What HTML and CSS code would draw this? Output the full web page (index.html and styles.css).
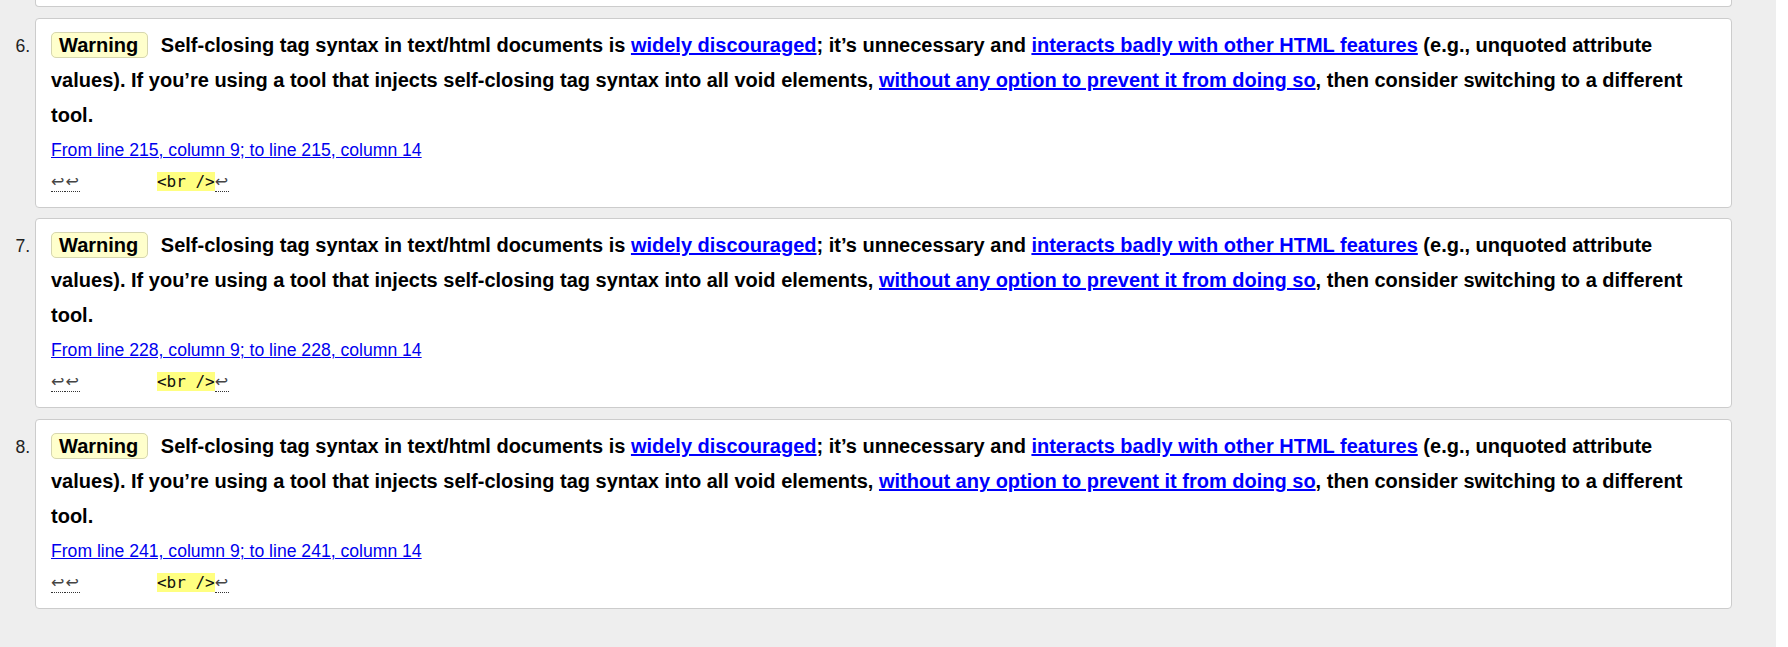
FILE: index.html
```html
<!DOCTYPE html>
<html lang="en">
<head>
<meta charset="utf-8">
<title>Validation results</title>
<link rel="stylesheet" href="styles.css">
</head>
<body>
<ol class="results" start="5">
  <li class="card cut"></li>
  <li class="card">
    <p class="msg"><strong class="badge">Warning</strong> <span>Self-closing tag syntax in text/html documents is <a href="#">widely discouraged</a>; it’s unnecessary and <a href="#">interacts badly with other HTML features</a> (e.g., unquoted attribute values). If you’re using a tool that injects self-closing tag syntax into all void elements, <a href="#">without any option to prevent it from doing so</a>, then consider switching to a different tool.</span></p>
    <p class="loc"><a href="#">From line 215, column 9; to line 215, column 14</a></p>
    <p class="extract"><code><span class="lf" title="Line break">↩</span><span class="lf" title="Line break">↩</span>        <b>&lt;br /&gt;</b><span class="lf" title="Line break">↩</span></code></p>
  </li>
  <li class="card">
    <p class="msg"><strong class="badge">Warning</strong> <span>Self-closing tag syntax in text/html documents is <a href="#">widely discouraged</a>; it’s unnecessary and <a href="#">interacts badly with other HTML features</a> (e.g., unquoted attribute values). If you’re using a tool that injects self-closing tag syntax into all void elements, <a href="#">without any option to prevent it from doing so</a>, then consider switching to a different tool.</span></p>
    <p class="loc"><a href="#">From line 228, column 9; to line 228, column 14</a></p>
    <p class="extract"><code><span class="lf" title="Line break">↩</span><span class="lf" title="Line break">↩</span>        <b>&lt;br /&gt;</b><span class="lf" title="Line break">↩</span></code></p>
  </li>
  <li class="card">
    <p class="msg"><strong class="badge">Warning</strong> <span>Self-closing tag syntax in text/html documents is <a href="#">widely discouraged</a>; it’s unnecessary and <a href="#">interacts badly with other HTML features</a> (e.g., unquoted attribute values). If you’re using a tool that injects self-closing tag syntax into all void elements, <a href="#">without any option to prevent it from doing so</a>, then consider switching to a different tool.</span></p>
    <p class="loc"><a href="#">From line 241, column 9; to line 241, column 14</a></p>
    <p class="extract"><code><span class="lf" title="Line break">↩</span><span class="lf" title="Line break">↩</span>        <b>&lt;br /&gt;</b><span class="lf" title="Line break">↩</span></code></p>
  </li>
</ol>
</body>
</html>
```
FILE: styles.css
```css
html {
  background: #ffffff;
}

body {
  margin: 0 12px 0 0;
  min-height: 100vh;
  background: #eeeeee;
  font-family: "Liberation Sans", Arial, sans-serif;
  font-size: 16px;
  color: #000;
}

.results {
  margin: 0;
  padding: 0 0 0 35px;
}

.card {
  margin: 0 44px 10.7px 0;
  padding: 9px 15px 13px 15px;
  background: #ffffff;
  border: 1px solid #cccccc;
  border-radius: 4px;
  color: #222;
  font-size: 17.6px;
}

.card.cut {
  list-style-type: none;
  height: 6px;
  padding: 0;
  border-top: none;
  border-radius: 0 0 4px 4px;
}

.card p {
  margin: 0;
}

.msg {
  font-size: 20px;
  line-height: 35px;
  font-weight: 700;
  color: #000;
}

.msg a {
  color: #0000ff;
  text-decoration: underline;
}

.badge {
  display: inline;
  padding: 1px 9px 1px 7px;
  margin-right: 7px;
  background: #ffffcc;
  border: 1px solid #d6d6b0;
  border-radius: 5px;
  font-weight: 700;
}

.loc {
  margin-top: 5px !important;
  line-height: 24px;
}

.loc a {
  color: #0000ee;
  text-decoration: underline;
}

.extract {
  margin-top: 8px !important;
  font-size: 16px;
  line-height: 24px;
}

.extract code {
  font-family: "DejaVu Sans Mono", "Liberation Mono", monospace;
  font-size: 16px;
  line-height: 24px;
  white-space: pre;
  color: #222;
}

.extract b {
  font-weight: 400;
  background: #ffff80;
  color: #111;
}

.lf {
  font-family: "DejaVu Sans", sans-serif;
  letter-spacing: 1px;
  color: #444;
  border-bottom: 1px dotted #333;
}
```
